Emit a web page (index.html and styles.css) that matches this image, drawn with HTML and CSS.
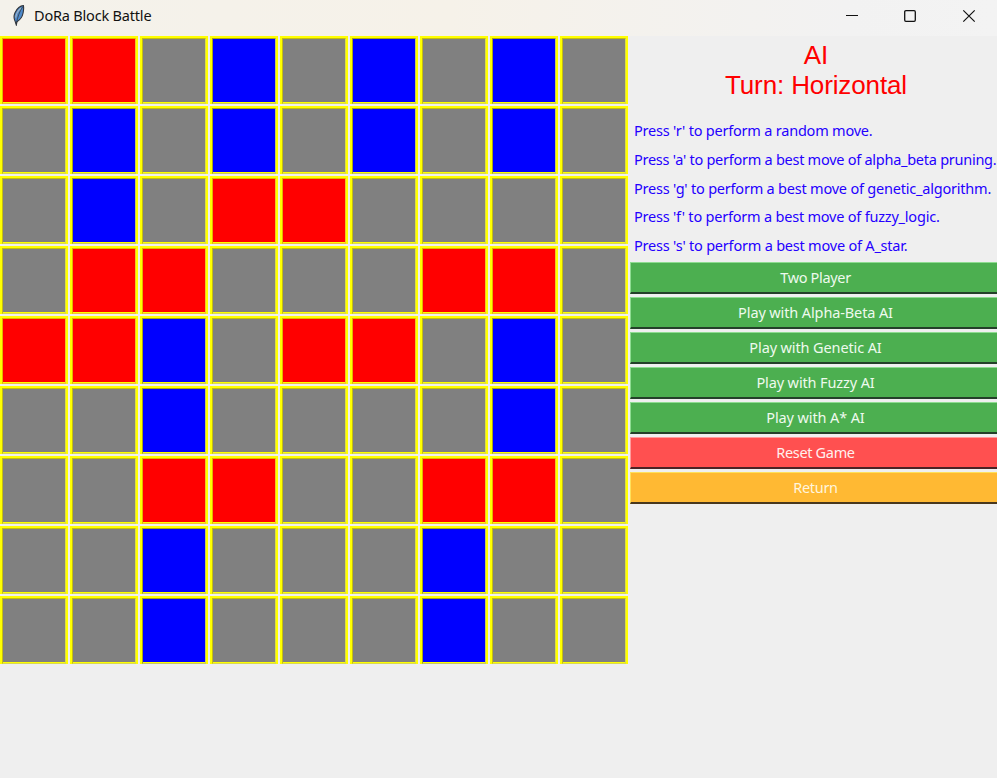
FILE: index.html
```html
<!DOCTYPE html>
<html lang="en">
<head>
<meta charset="utf-8">
<title>DoRa Block Battle</title>
<link rel="stylesheet" href="styles.css">
</head>
<body>
<header class="titlebar">
  <svg class="feather" width="14" height="22" viewBox="0 0 14 22">
    <path d="M11.4 1.6C8.5 1.6 5 4.6 3 8.8C1.7 11.7 1.7 14.8 3.2 17.6L4.3 21L5 17.7C8.4 15.7 10.4 12.6 11.1 9C11.6 6.4 12 4 11.4 1.6Z" fill="#4e8acb" stroke="#30343a" stroke-width="1.1"/>
    <path d="M10.6 3C7.6 7.5 5.6 12.5 4.4 19.5" fill="none" stroke="#303840" stroke-width=".8"/>
    <path d="M8.8 4.1C6 6.5 4.2 9.8 3.7 13.6" fill="none" stroke="#a4b4c4" stroke-width="1.1"/>
  </svg>
  <h1 class="title">DoRa Block Battle</h1>
  <svg class="controls" width="131" height="14" viewBox="0 0 131 14" fill="none" stroke="#111">
    <path d="M0 6.5H12" stroke-width="1"/>
    <rect x="58.7" y="1.7" width="10.6" height="10.6" rx="1.2" stroke-width="1.3"/>
    <path d="M117.3 1.3L128.7 12.7M128.7 1.3L117.3 12.7" stroke-width="1.2"/>
  </svg>
</header>
<main class="game">
  <div class="board" id="board"></div>
  <aside class="panel">
    <div class="status"><div class="player">AI</div><div class="turn">Turn: Horizontal</div></div>
    <div class="help">
      <p>Press 'r' to perform a random move.</p>
      <p class="long">Press 'a' to perform a best move of alpha_beta pruning.</p>
      <p>Press 'g' to perform a best move of genetic_algorithm.</p>
      <p>Press 'f' to perform a best move of fuzzy_logic.</p>
      <p>Press 's' to perform a best move of A_star.</p>
    </div>
    <div class="buttons">
      <button>Two Player</button>
      <button class="play">Play with Alpha-Beta AI</button>
      <button class="play">Play with Genetic AI</button>
      <button class="play">Play with Fuzzy AI</button>
      <button class="play">Play with A* AI</button>
      <button class="reset">Reset Game</button>
      <button class="return">Return</button>
    </div>
  </aside>
</main>
<script src="board.js"></script>
</body>
</html>
```
FILE: styles.css
```css
* { box-sizing: border-box; }
body { margin: 0; width: 997px; height: 778px; overflow: hidden; background: #efefef; font-family: "Noto Sans", sans-serif; }
.titlebar { height: 36px; display: flex; align-items: center; padding: 0 20px 4px 12px; background: linear-gradient(90deg, #f4f2eb 0, #f6f2e9 45%, #f2f2f2 85%, #f3f3f3 100%); }
.feather { flex: none; margin-top: -3px; }
.title { margin: -2px 0 0 8px; font-size: 14.5px; font-weight: 400; line-height: 20px; color: #111; white-space: nowrap; letter-spacing: -.19px; }
.controls { flex: none; margin-left: auto; }
.game { display: flex; height: 742px; }
.board { flex: none; width: 630px; height: 630px; display: grid; grid-template-columns: repeat(9, 68px); grid-auto-rows: 68px; gap: 2px; background: #efefef; }
.cell { border: 2px solid #ff0; background: #808080; }
.cell::before { content: ""; display: block; height: 100%; border: 1px solid; border-color: #c4be10 #dada50 #dada50 #c4be10; }
.red { background: #f00; }
.red::before { border-color: #e0b800 #f5c030 #f5c030 #e0b800; }
.blue { background: #00f; }
.blue::before { border-color: #a8a414 #c8c864 #c8c864 #a8a414; }
.panel { flex: none; width: 372px; }
.status { height: 80px; padding-top: 4px; text-align: center; font: 26px/30px "Liberation Sans", Arial, sans-serif; letter-spacing: -.12px; color: #f00; }
.help { height: 146px; color: #2400ff; font-size: 14.5px; }
.help p { margin: 0; height: 28.8px; line-height: 28.4px; padding-left: 4px; white-space: nowrap; letter-spacing: -.21px; }
.help .long { letter-spacing: -.26px; }
.buttons { display: grid; gap: 3px; }
button { display: block; width: 372px; height: 32px; margin: 0; padding: 0 2px 2px 0; border: solid; border-width: 1px 0 2px 1px; border-color: #8edc91 #222 #24402a #8edc91; border-radius: 0; background: #4caf50; color: #eefaee; font: 14.5px/20px "Noto Sans", sans-serif; letter-spacing: -.33px; }
.play { letter-spacing: -.12px; }
.reset { background: #ff5050; border-color: #ff9d9d #222 #4a2225 #ff9d9d; color: #fff0ee; }
.return { background: #ffb933; border-color: #ffe05a #222 #49371d #ffe05a; color: #fff5dc; }
```
FILE: board.js
```js
const rows = [
  "RR.B.B.B.",
  ".B.B.B.B.",
  ".B.RR....",
  ".RR...RR.",
  "RRB.RR.B.",
  "..B....B.",
  "..RR..RR.",
  "..B...B..",
  "..B...B.."
];
const names = { R: "cell red", B: "cell blue", ".": "cell" };
const board = document.getElementById("board");
for (const row of rows) {
  for (const c of row) {
    const cell = document.createElement("div");
    cell.className = names[c];
    board.append(cell);
  }
}
```
